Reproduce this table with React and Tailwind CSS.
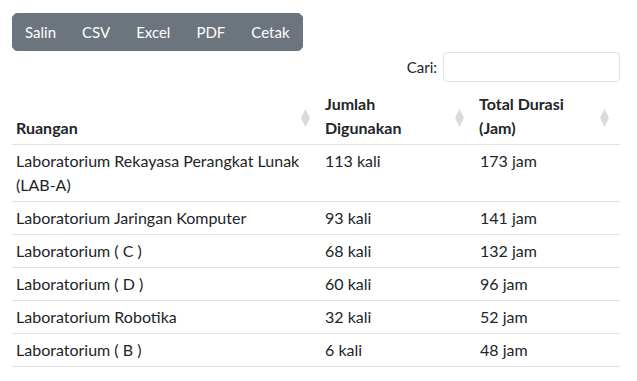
import React from 'react';

const rows = [
  { name: 'Laboratorium Rekayasa Perangkat Lunak (LAB-A)', count: '113 kali', hours: '173 jam' },
  { name: 'Laboratorium Jaringan Komputer', count: '93 kali', hours: '141 jam' },
  { name: 'Laboratorium ( C )', count: '68 kali', hours: '132 jam' },
  { name: 'Laboratorium ( D )', count: '60 kali', hours: '96 jam' },
  { name: 'Laboratorium Robotika', count: '32 kali', hours: '52 jam' },
  { name: 'Laboratorium ( B )', count: '6 kali', hours: '48 jam' },
];

// sort indicator: a light grey diamond (up + down arrows merged)
const SortIcon = () => (
  <svg width="9" height="18" viewBox="0 0 9 18" className="absolute right-[11px] top-[21px]">
    <path d="M4.5 0 L9 9 L4.5 18 L0 9 Z" fill="#dadada" />
  </svg>
);

const Header = ({ children, width }) => (
  <th className={`relative ${width} border-b border-[#dee2e6] px-1 py-1 pr-7 text-left align-bottom font-bold`}>
    {children}
    <SortIcon />
  </th>
);

export default function App() {
  return (
    <div className="min-h-screen bg-white px-3 pt-[13px] text-[16px] leading-6 text-[#212529]" style={{ fontFamily: 'Lato, "Liberation Sans", sans-serif' }}>
      <div className="inline-flex overflow-hidden rounded-md bg-[#6c757d] text-white">
        {['Salin', 'CSV', 'Excel', 'PDF', 'Cetak'].map((b) => (
          <button key={b} className="border border-[#6c757d] px-3 py-1.5 text-[15px] leading-6">
            {b}
          </button>
        ))}
      </div>

      <div className="mt-px flex items-center justify-end gap-1.5 pr-[5px]">
        <label className="text-[15px]">Cari:</label>
        <input className="h-[30px] w-[177px] rounded border border-[#dee2e6] px-2 text-sm outline-none" />
      </div>

      <table className="mt-[6px] w-[608px] table-fixed border-collapse">
        <thead>
          <tr>
            <Header width="w-[309px]">Ruangan</Header>
            <Header width="w-[154px]">
              Jumlah
              <br />
              Digunakan
            </Header>
            <Header width="w-[145px]">
              Total Durasi
              <br />
              (Jam)
            </Header>
          </tr>
        </thead>
        <tbody>
          {rows.map((r) => (
            <tr key={r.name} className="border-b border-[#dee2e6]">
              <td className="px-1 py-1 pr-5 align-top">{r.name}</td>
              <td className="px-1 py-1 align-top">{r.count}</td>
              <td className="px-1 py-1 pl-[5px] align-top">{r.hours}</td>
            </tr>
          ))}
        </tbody>
      </table>
    </div>
  );
}
